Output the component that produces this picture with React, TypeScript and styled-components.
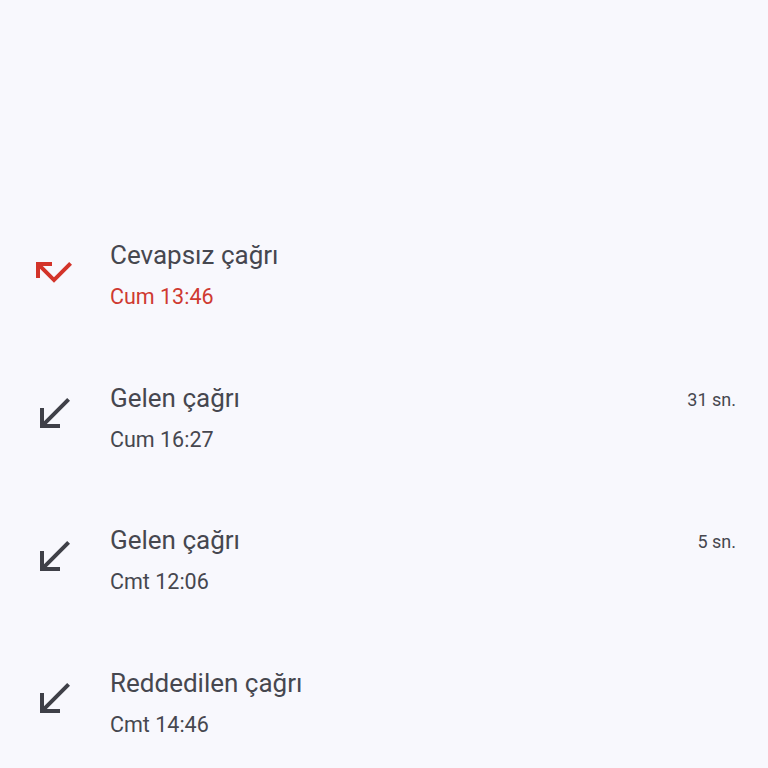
import React from "react";
import styled, { createGlobalStyle } from "styled-components";

const Global = createGlobalStyle`
  html, body { margin: 0; padding: 0; background: #f8f8fd; }
  body { font-family: Roboto, "Noto Sans", sans-serif; }
`;

const Page = styled.div`
  width: 768px;
  height: 768px;
  background: #f8f8fd;
  padding-top: 205px;
  box-sizing: border-box;
  overflow: hidden;
`;

const Row = styled.div`
  display: flex;
  align-items: center;
  height: 142.5px;
  padding: 0 32px 0 30px;
  box-sizing: border-box;
`;

const IconBox = styled.div`
  width: 48px;
  height: 48px;
  flex: none;
  margin-right: 32px;
  margin-top: -9px;
  display: flex;
`;

const Texts = styled.div`
  flex: 1;
  display: flex;
  flex-direction: column;
  gap: 11px;
  margin-bottom: 3px;
`;

const Title = styled.div`
  font-size: 26px;
  line-height: 34px;
  color: #46474f;
`;

const Sub = styled.div<{ $missed?: boolean }>`
  font-size: 21.5px;
  line-height: 28px;
  color: ${(p) => (p.$missed ? "#cf3a31" : "#46474f")};
`;

const Duration = styled.div`
  font-size: 18px;
  color: #46474f;
  align-self: flex-start;
  margin-top: 41px;
`;

const MissedIcon = () => (
  <svg width="48" height="48" viewBox="0 0 24 24">
    <path fill="#d3342a" d="M19.59 7L12 14.59 6.41 9H11V7H3v8h2v-4.59l7 7 9-9z" />
  </svg>
);

const ReceivedIcon = () => (
  <svg width="48" height="48" viewBox="0 0 24 24">
    <path fill="#3f4048" d="M20 5.41L18.59 4 7 15.59V9H5v10h10v-2H8.41z" />
  </svg>
);

type Call = { title: string; time: string; missed?: boolean; dur?: string };

const calls: Call[] = [
  { title: "Cevapsız çağrı", time: "Cum 13:46", missed: true },
  { title: "Gelen çağrı", time: "Cum 16:27", dur: "31 sn." },
  { title: "Gelen çağrı", time: "Cmt 12:06", dur: "5 sn." },
  { title: "Reddedilen çağrı", time: "Cmt 14:46" },
];

export default function App() {
  return (
    <Page>
      <Global />
      {calls.map((c, i) => (
        <Row key={i}>
          <IconBox>{c.missed ? <MissedIcon /> : <ReceivedIcon />}</IconBox>
          <Texts>
            <Title>{c.title}</Title>
            <Sub $missed={c.missed}>{c.time}</Sub>
          </Texts>
          {c.dur && <Duration>{c.dur}</Duration>}
        </Row>
      ))}
    </Page>
  );
}
